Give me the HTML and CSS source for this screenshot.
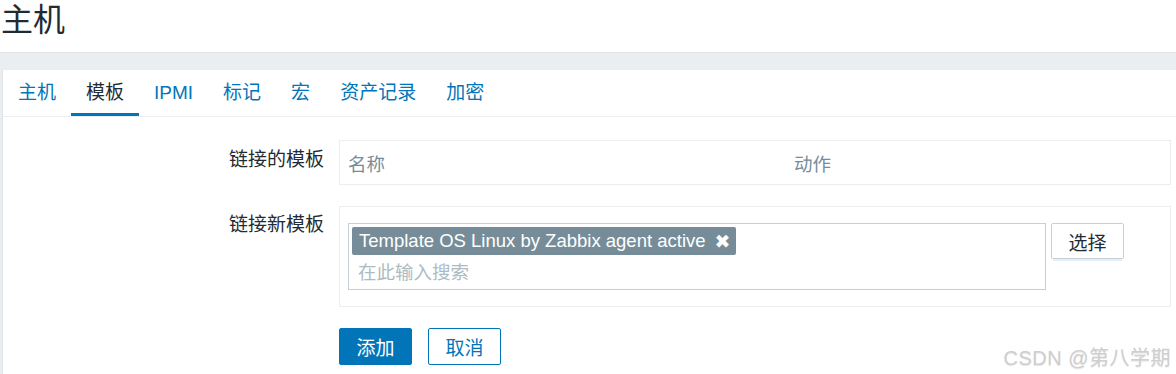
FILE: index.html
```html
<!DOCTYPE html>
<html lang="zh">
<head>
<meta charset="utf-8">
<title>主机</title>
<link rel="stylesheet" href="styles.css">
</head>
<body>
<header class="page-header">
  <h1 class="page-title">主机</h1>
</header>
<div class="band"></div>
<div class="wrap">
  <div class="panel">
    <nav class="tabs">
      <a class="tab">主机</a>
      <a class="tab active">模板</a>
      <a class="tab">IPMI</a>
      <a class="tab">标记</a>
      <a class="tab">宏</a>
      <a class="tab">资产记录</a>
      <a class="tab">加密</a>
    </nav>
    <div class="form">
      <div class="row">
        <div class="label label-first">链接的模板</div>
        <div class="box table-box">
          <span class="th th-name">名称</span>
          <span class="th">动作</span>
        </div>
      </div>
      <div class="row">
        <div class="label">链接新模板</div>
        <div class="box ms-box">
          <div class="multiselect">
            <span class="tag">Template OS Linux by Zabbix agent active <span class="tag-x">✖</span></span>
            <span class="placeholder">在此输入搜索</span>
          </div>
          <div class="select-wrap">
            <button class="btn-select">选择</button>
          </div>
        </div>
      </div>
      <div class="row actions">
        <div class="label"></div>
        <div class="btns">
          <button class="btn btn-primary">添加</button>
          <button class="btn btn-alt">取消</button>
        </div>
      </div>
    </div>
    <div class="watermark">CSDN @第八学期</div>
  </div>
</div>
</body>
</html>
```

FILE: styles.css
```css
* { box-sizing: border-box; }
html, body {
  margin: 0;
  padding: 0;
  background: #ffffff;
  font-family: "Liberation Sans", Arial, "Noto Sans CJK SC", sans-serif;
  color: #1f2c33;
  overflow: hidden;
}
.page-header {
  height: 52px;
  padding-left: 1px;
}
.page-title {
  margin: 0;
  font-weight: normal;
  font-size: 32px;
  line-height: 40px;
  color: #1f2c33;
}
.band {
  height: 18px;
  background: #ebeef0;
  border-top: 1px solid #e1e5e8;
}
.wrap {
  background: #ebeef0;
  padding-left: 2px;
  height: 310px;
}
.panel {
  position: relative;
  background: #ffffff;
  border-left: 1px solid #dfe4e7;
  height: 100%;
}
.tabs {
  display: flex;
  height: 47px;
  border-bottom: 1px solid #ebeef0;
}
.tab {
  display: block;
  padding: 0 15px;
  height: 46px;
  line-height: 46px;
  font-size: 19px;
  color: #0275b8;
  cursor: pointer;
}
.tab.active {
  color: #1f2c33;
  border-bottom: 3px solid #0275b8;
}
.form {
  padding-top: 23px;
}
.row {
  display: flex;
  margin-bottom: 21px;
}
.label {
  width: 321px;
  flex: none;
  text-align: right;
  font-size: 19px;
  line-height: 24px;
  padding-top: 7px;
  color: #1f2c33;
  margin-right: 15px;
}
.label-first {
  padding-top: 8px;
}
.box {
  width: 832px;
  border: 1px solid #ebeef0;
  background: #ffffff;
}
.table-box {
  height: 45px;
  display: flex;
  align-items: center;
  padding-left: 8px;
}
.th {
  font-size: 18.5px;
  color: #768d99;
}
.th-name {
  width: 446px;
}
.ms-box {
  height: 101px;
  display: flex;
  padding: 16px 0 16px 8px;
}
.multiselect {
  width: 698px;
  height: 67px;
  border: 1px solid #c5d0d4;
  padding: 3px 3px 0 3px;
  display: flex;
  flex-direction: column;
  align-items: flex-start;
}
.tag {
  display: inline-flex;
  align-items: center;
  height: 28px;
  background: #768d99;
  color: #ffffff;
  border-radius: 2px;
  font-size: 18.5px;
  padding: 0 6px 0 7px;
  white-space: nowrap;
}
.tag-x {
  margin-left: 9px;
  font-size: 19px;
  font-weight: bold;
  font-family: "DejaVu Sans", sans-serif;
  line-height: 1;
}
.placeholder {
  margin-top: 6px;
  margin-left: 6px;
  font-size: 18.5px;
  color: #acbbc2;
  line-height: 24px;
}
.select-wrap {
  margin-left: 5px;
}
.btn-select {
  width: 73px;
  height: 36px;
  background: #ffffff;
  border: 1px solid #c5d0d4;
  border-radius: 2px;
  font-family: "Liberation Sans", Arial, "Noto Sans CJK SC", sans-serif;
  font-size: 19px;
  color: #1f2c33;
  padding: 0;
  box-shadow: 0 4px 0 -2px #e3eefa;
}
.btns {
  display: flex;
  gap: 16px;
}
.btn {
  width: 73px;
  height: 37px;
  border-radius: 2px;
  font-family: "Liberation Sans", Arial, "Noto Sans CJK SC", sans-serif;
  font-size: 19px;
  padding: 0;
}
.btn-primary {
  background: #0275b8;
  border: 1px solid #0275b8;
  color: #ffffff;
}
.btn-alt {
  background: #ffffff;
  border: 1px solid #0275b8;
  color: #0275b8;
}
.watermark {
  position: absolute;
  right: 5px;
  top: 272px;
  font-size: 20px;
  font-weight: normal;
  color: #cfcfcf;
  text-shadow: 0 1px 1px #e4e4e4;
  letter-spacing: 0.5px;
}
```
